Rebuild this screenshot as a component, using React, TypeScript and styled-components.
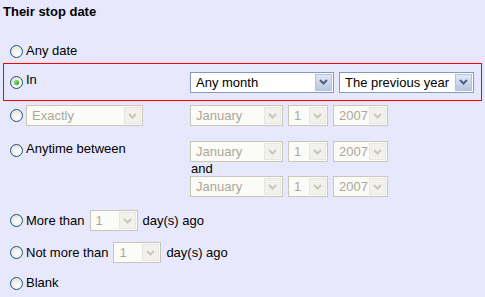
import React from 'react'
import styled, {createGlobalStyle} from 'styled-components'

const GlobalStyle = createGlobalStyle`
  body {
    margin: 0;
    background: #e8e8fc;
    font-family: "Liberation Sans", Arial, sans-serif;
    font-size: 13px;
    color: #000;
  }
`

const Page = styled.div`
  width: 485px;
  height: 297px;
  padding: 0 3px;
  box-sizing: border-box;
  overflow: hidden;
  display: flex;
  flex-direction: column;
`

const Title = styled.div`
  font-weight: bold;
  height: 24px;
  line-height: 24px;
  flex-shrink: 0;
`

const Row = styled.div<{$h: number; $top?: number; $active?: boolean; $start?: boolean}>`
  display: flex;
  align-items: ${p => (p.$start ? 'flex-start' : 'center')};
  height: ${p => p.$h}px;
  margin-top: ${p => p.$top ?? 0}px;
  padding-left: 6px;
  padding-top: ${p => (p.$start ? 10 : 0)}px;
  border: 1px solid ${p => (p.$active ? '#ff0000' : 'transparent')};
  box-sizing: border-box;
  flex-shrink: 0;
`

const LeftCell = styled.div<{$start?: boolean}>`
  width: 180px;
  display: flex;
  align-items: ${p => (p.$start ? 'flex-start' : 'center')};
`

const RightCell = styled.div`
  display: flex;
  flex-direction: column;
`

const Inline = styled.div`
  display: flex;
  align-items: center;
  gap: 5px;
`

const Radio = styled.span<{$checked?: boolean; $offset?: number}>`
  width: 13px;
  height: 13px;
  box-sizing: border-box;
  border-radius: 50%;
  border: 1px solid #1c5180;
  background: radial-gradient(circle at 65% 70%, #ffffff 0%, #f2f2ee 45%, #d6d5cc 100%);
  margin-right: 3px;
  margin-top: ${p => p.$offset ?? 0}px;
  flex-shrink: 0;
  display: flex;
  align-items: center;
  justify-content: center;

  &::after {
    content: '';
    display: ${p => (p.$checked ? 'block' : 'none')};
    width: 5px;
    height: 5px;
    border-radius: 50%;
    background: radial-gradient(circle at 35% 35%, #9ee38c 0%, #3bb02a 60%, #1f8a16 100%);
  }
`

const Label = styled.span<{$lift?: number}>`
  line-height: 16px;
  white-space: nowrap;
  position: relative;
  top: ${p => -(p.$lift ?? 0)}px;
`

const SelectBox = styled.div<{$w: number; $disabled?: boolean}>`
  width: ${p => p.$w}px;
  height: 21px;
  box-sizing: border-box;
  border: 1px solid ${p => (p.$disabled ? '#c9c7ba' : '#7f9db9')};
  background: ${p => (p.$disabled ? '#fbfbf8' : '#ffffff')};
  color: ${p => (p.$disabled ? '#aca899' : '#000000')};
  display: flex;
  align-items: center;
  flex-shrink: 0;
`

const SelectValue = styled.span`
  flex: 1;
  padding-left: 5px;
  white-space: nowrap;
  overflow: hidden;
  font-size: 13px;
`

const ArrowButton = styled.span<{$disabled?: boolean}>`
  width: 17px;
  height: 17px;
  margin: 1px;
  box-sizing: border-box;
  border: 1px solid ${p => (p.$disabled ? '#e8e6de' : '#b4c2e0')};
  background: ${p =>
    p.$disabled ? '#f2f1ec' : 'linear-gradient(#e1e7f6, #bac5df)'};
  display: flex;
  align-items: center;
  justify-content: center;
  flex-shrink: 0;
`

const And = styled.div`
  height: 14px;
  line-height: 14px;
  padding-left: 1px;
`

const RowGap = styled.div`
  display: flex;
  gap: 5px;
`

function Select({w, value, disabled}: {w: number; value: string; disabled?: boolean}) {
  return (
    <SelectBox $w={w} $disabled={disabled}>
      <SelectValue>{value}</SelectValue>
      <ArrowButton $disabled={disabled}>
        <svg width="9" height="6" viewBox="0 0 9 6">
          <polyline
            points="1,1 4.5,4.5 8,1"
            fill="none"
            stroke={disabled ? '#c9c7ba' : '#4d6185'}
            strokeWidth="2"
          />
        </svg>
      </ArrowButton>
    </SelectBox>
  )
}

function DateSelects() {
  return (
    <RowGap>
      <Select w={93} value="January" disabled />
      <Select w={40} value="1" disabled />
      <Select w={55} value="2007" disabled />
    </RowGap>
  )
}

export default function App() {
  return (
    <Page>
      <GlobalStyle />
      <Title>Their stop date</Title>

      <Row $h={24} $top={15}>
        <LeftCell>
          <Radio />
          <Label>Any date</Label>
        </LeftCell>
      </Row>

      <Row $h={38} $active>
        <LeftCell>
          <Radio $checked />
          <Label $lift={2}>In</Label>
        </LeftCell>
        <RowGap>
          <Select w={144} value="Any month" />
          <Select w={135} value="The previous year" />
        </RowGap>
      </Row>

      <Row $h={29}>
        <LeftCell>
          <Radio />
          <Select w={117} value="Exactly" disabled />
        </LeftCell>
        <DateSelects />
      </Row>

      <Row $h={66} $start>
        <LeftCell $start>
          <Radio $offset={3} />
          <Label>Anytime between</Label>
        </LeftCell>
        <RightCell>
          <DateSelects />
          <And>and</And>
          <DateSelects />
        </RightCell>
      </Row>

      <Row $h={31} $top={9}>
        <Radio />
        <Inline>
          <Label>More than</Label>
          <Select w={48} value="1" disabled />
          <Label>day(s) ago</Label>
        </Inline>
      </Row>

      <Row $h={33}>
        <Radio />
        <Inline>
          <Label>Not more than</Label>
          <Select w={48} value="1" disabled />
          <Label>day(s) ago</Label>
        </Inline>
      </Row>

      <Row $h={28}>
        <Radio />
        <Label>Blank</Label>
      </Row>
    </Page>
  )
}
